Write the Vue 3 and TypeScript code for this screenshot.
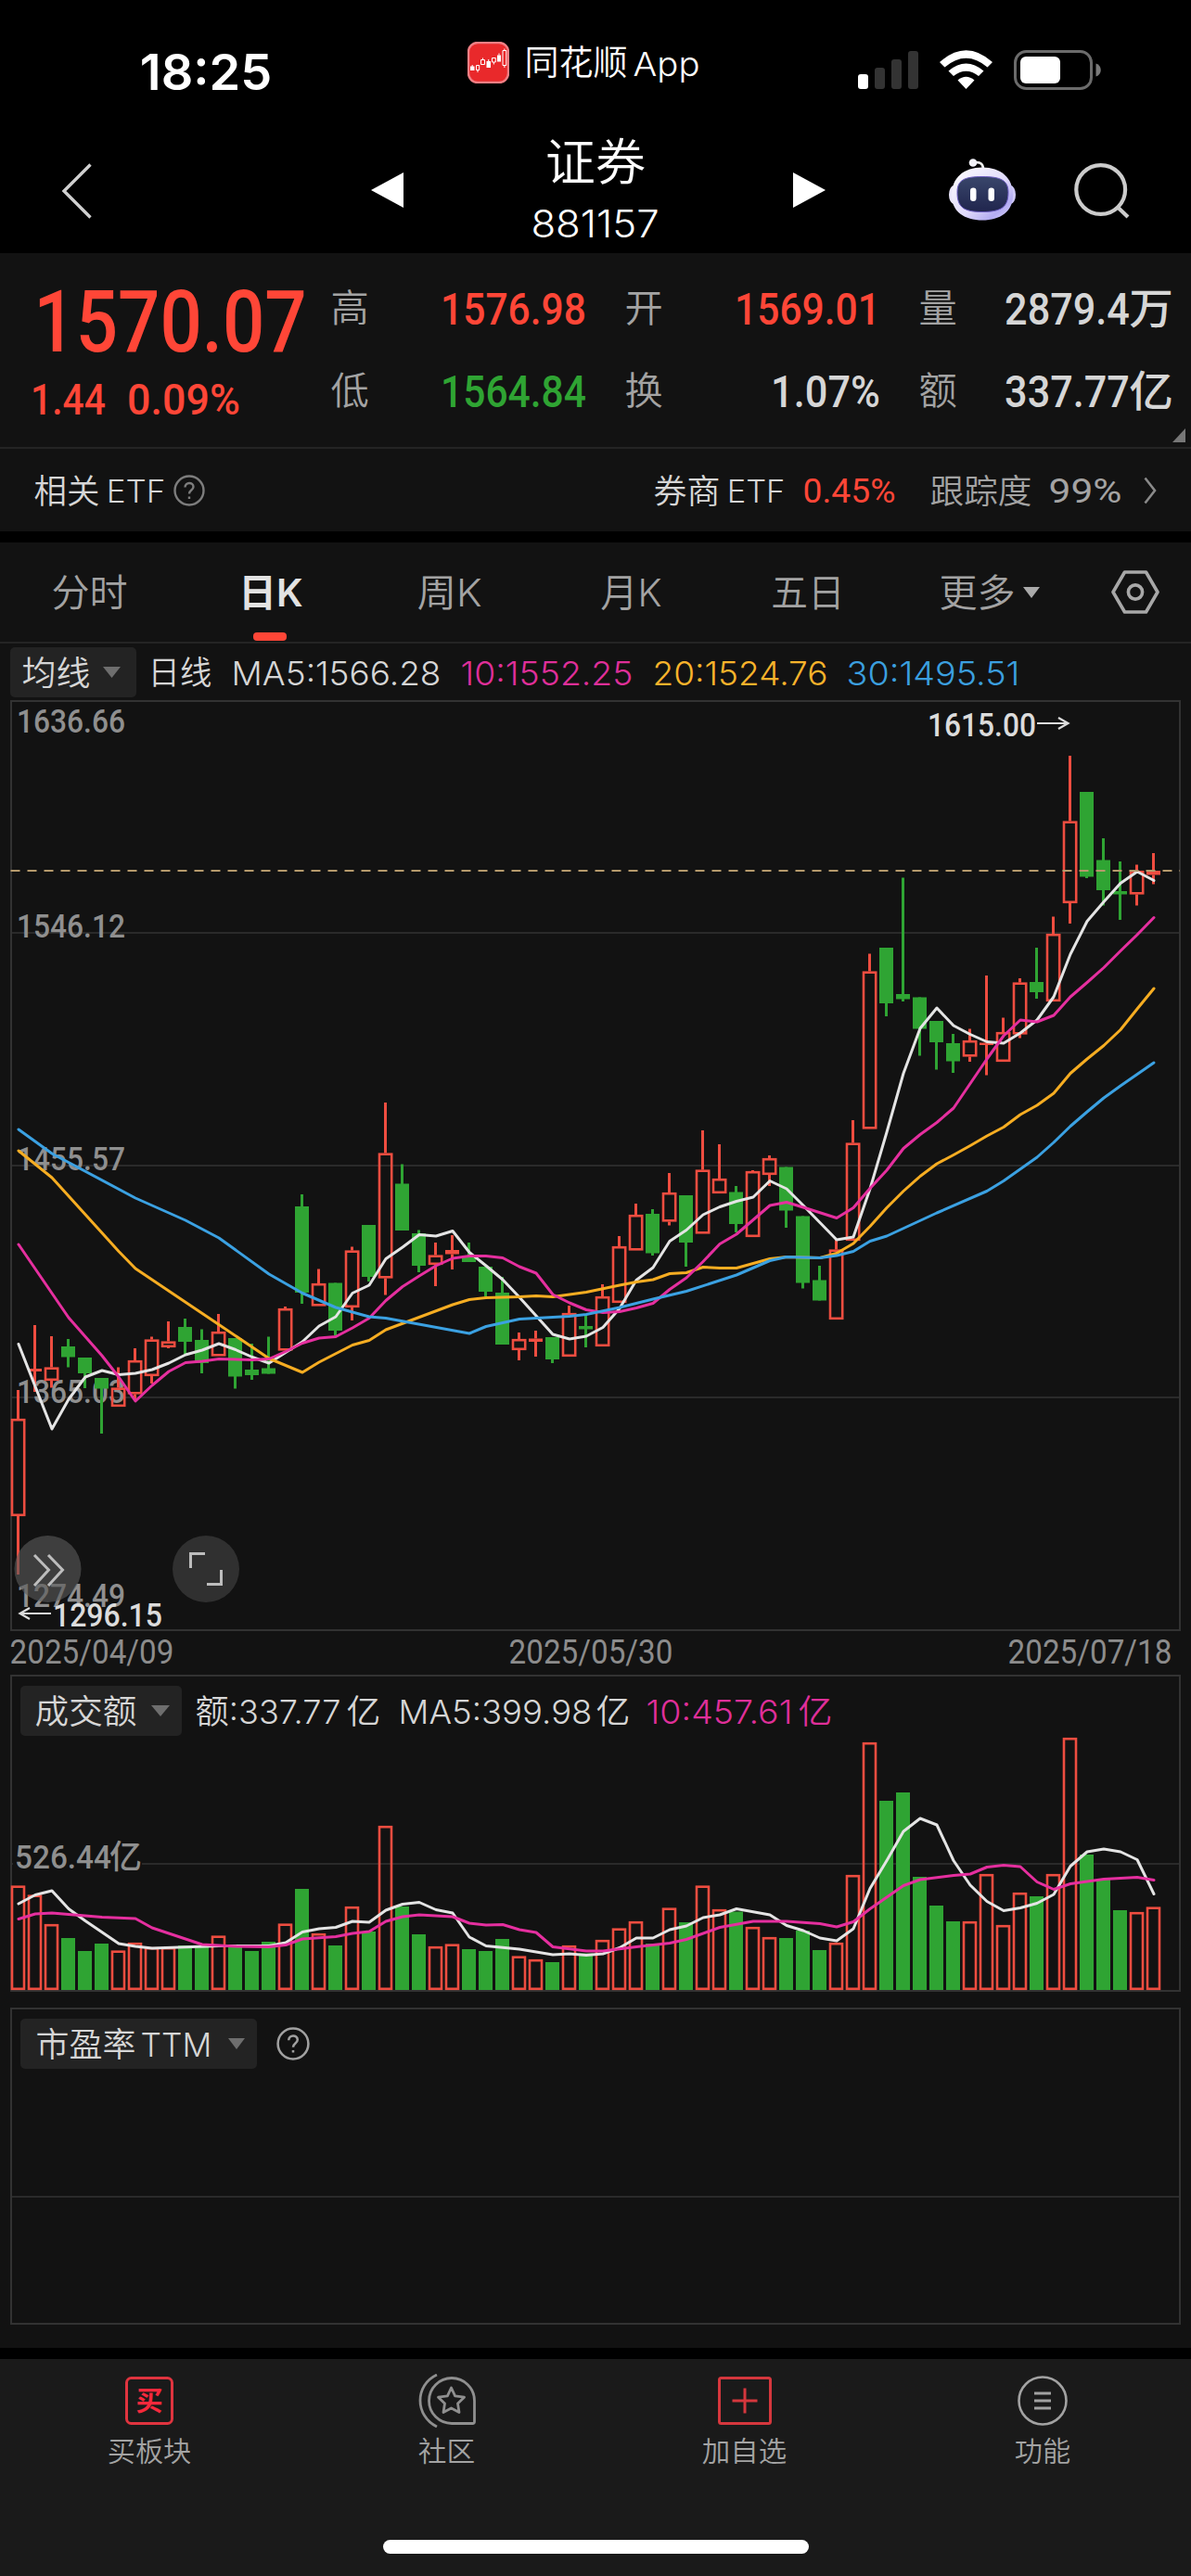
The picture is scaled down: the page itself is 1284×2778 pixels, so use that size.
<script setup lang="ts">
import { h, type FunctionalComponent } from 'vue'

interface FitProps {
  t: string
  w: number
  s: number
}

// One line of text whose glyphs are fitted to an exact width.
const FitText: FunctionalComponent<FitProps> = (p) => {
  const bearing = Number(p.s) * 0.04
  return h('svg', { class: 'fit', width: p.w, height: p.s }, [
    h(
      'text',
      {
        x: -bearing,
        y: p.s * 0.875,
        'font-size': p.s,
        textLength: Number(p.w) + bearing * 2,
        lengthAdjust: 'spacingAndGlyphs',
      },
      p.t,
    ),
  ])
}
FitText.props = ['t', 'w', 's']

type Candle = [up: 0 | 1, high: number, top: number, bottom: number, low: number, volume: number]

const STEP = 18
const FIRST = 19.5
const FLOOR = 2146

const candles: Candle[] = [
  [1, 1499, 1530, 1635, 1698, 2033.5], [1, 1429, 1476, 1479, 1501, 2043.5], [1, 1441, 1474.5, 1489, 1496.5, 2075],
  [0, 1444, 1452, 1463.5, 1474.5, 2090], [0, 1464, 1464, 1481, 1497, 2104], [0, 1486, 1486, 1497.5, 1546, 2096],
  [1, 1474.5, 1496.5, 1517, 1517, 2103.5], [1, 1454, 1467, 1503.5, 1510, 2095], [1, 1441.5, 1444.5, 1484, 1492, 2100],
  [1, 1425, 1446.5, 1453, 1454, 2100], [0, 1422, 1431, 1447, 1460, 2098], [0, 1433.5, 1445, 1470, 1481, 2099],
  [1, 1417, 1436, 1462.5, 1462.5, 2087.5], [0, 1443, 1443, 1484.5, 1497.5, 2100], [0, 1449, 1477, 1483, 1488, 2104],
  [0, 1441.5, 1475.5, 1481.5, 1481.5, 2094], [1, 1409, 1411, 1456.5, 1456.5, 2074.5], [0, 1288, 1301, 1394, 1406, 2037],
  [1, 1368.5, 1384, 1408.5, 1408.5, 2085], [0, 1383.5, 1383.5, 1435, 1440.5, 2098], [1, 1344.5, 1348.5, 1410, 1424, 2056],
  [0, 1321, 1321, 1377, 1382, 2083], [1, 1189, 1243.5, 1378.5, 1396.5, 1969], [0, 1255.5, 1276.5, 1327, 1327, 2056],
  [0, 1326.5, 1330, 1365, 1372, 2086], [1, 1340, 1353.5, 1364, 1387, 2099], [1, 1332, 1348, 1352.5, 1369, 2096.5],
  [0, 1340, 1354.5, 1361, 1361, 2102], [0, 1366, 1366, 1393, 1398, 2104], [0, 1377, 1394, 1450, 1450, 2091],
  [1, 1437, 1444, 1456, 1467, 2109.5], [1, 1435, 1443.5, 1447, 1463, 2113], [0, 1442, 1442, 1466, 1470, 2116],
  [1, 1408, 1416, 1463, 1463, 2098], [0, 1418, 1430, 1433.5, 1453, 2106.5], [1, 1385, 1398, 1452, 1452, 2092],
  [1, 1333, 1344, 1405, 1405, 2079.5], [1, 1298, 1310, 1348.5, 1348.5, 2072], [0, 1304, 1309, 1351.5, 1354, 2096],
  [1, 1265, 1286, 1317.5, 1321.5, 2057.5], [0, 1289, 1289, 1340, 1366, 2073], [1, 1219, 1261.5, 1330.5, 1330.5, 2033.5],
  [1, 1234, 1271, 1287, 1287, 2059], [0, 1279, 1285.5, 1320, 1329, 2061.5], [1, 1262, 1263, 1334, 1334, 2078],
  [1, 1246, 1249, 1267, 1279, 2089], [0, 1258.5, 1258.5, 1305.5, 1324, 2090], [0, 1311.5, 1311.5, 1383.5, 1389.5, 2082],
  [0, 1365, 1380.5, 1402.5, 1402.5, 2103], [1, 1337, 1347.5, 1423, 1423, 2095], [1, 1208, 1232.5, 1338, 1338, 2022],
  [1, 1028.5, 1047.5, 1217.5, 1217.5, 1879], [0, 1022, 1022, 1082, 1096, 1942], [0, 946.5, 1072, 1077.5, 1080, 1933],
  [0, 1075.5, 1075.5, 1109.5, 1138.5, 2024], [0, 1101, 1101, 1124, 1153.5, 2055], [0, 1115, 1125, 1144.5, 1157, 2072],
  [1, 1109.5, 1122, 1139.5, 1145, 2072], [1, 1052, 1124.5, 1127, 1159.5, 2021], [1, 1097.5, 1113, 1145, 1145, 2076],
  [1, 1055, 1059.5, 1115.5, 1119.5, 2041], [0, 1022, 1059, 1070, 1077, 2045], [1, 988.5, 1007, 1080, 1080, 2021],
  [1, 815, 885.5, 974, 996, 1874], [0, 854, 854, 945.5, 947, 2000], [0, 904, 927.5, 960, 976.5, 2026],
  [0, 929, 961, 964.5, 992, 2060], [1, 932.5, 939, 964.5, 976.5, 2062], [1, 920, 939, 943.5, 953.5, 2056.5],
]

const bars = candles.map(([up, high, top, bottom, low, volume], i) => ({
  up: up === 1,
  x: FIRST + i * STEP,
  high,
  top,
  bottom,
  low,
  volume,
  hollow: bottom - top > 5,
}))

// Each curve is a flat list of candle index, height pairs.
function curve(pairs: number[]): string {
  const out: string[] = []
  for (let i = 0; i < pairs.length; i += 2) {
    out.push(`${FIRST + 0.5 + pairs[i] * STEP},${pairs[i + 1]}`)
  }
  return out.join(' ')
}

const priceCurves = [
  { name: 'ma5', points: curve([0, 1449.5, 2, 1541, 3, 1509, 4, 1485, 5, 1478, 6, 1482.5, 7, 1481, 8, 1477, 9, 1470, 10, 1461, 11, 1456, 12, 1449, 13, 1455.5, 14, 1463.5, 15, 1470, 16, 1458.5, 17, 1447, 18, 1430, 19, 1420, 20, 1394.5, 21, 1386, 22, 1357.5, 23, 1345, 24, 1331.5, 25, 1333, 26, 1327.5, 27, 1350.5, 28, 1365, 29, 1380, 30, 1399, 31, 1419, 32, 1439, 33, 1444, 34, 1441, 35, 1431.5, 36, 1411, 37, 1380.5, 38, 1367, 39, 1338.5, 40, 1326.5, 41, 1310, 42, 1301.5, 43, 1295.5, 44, 1291, 45, 1273.5, 46, 1282, 47, 1300, 48, 1318.5, 49, 1337, 50, 1334, 51, 1282, 52, 1221, 53, 1157.5, 54, 1109, 55, 1087, 56, 1106, 57, 1115.5, 58, 1123.5, 59, 1125, 60, 1114, 61, 1100, 62, 1075, 63, 1029, 64, 993.5, 65, 972.5, 66, 952.5, 67, 940, 68, 949.5]) },
  { name: 'ma20', points: curve([0, 1241, 2, 1270, 6, 1349.5, 7, 1368, 12, 1428.5, 15, 1465, 17, 1480, 18, 1469, 20, 1450.5, 21, 1445.5, 22, 1434, 26, 1407, 27, 1401.5, 28, 1399.5, 30, 1398.5, 31, 1397.5, 32, 1398.5, 34, 1393.5, 36, 1386, 37, 1382.5, 38, 1380, 39, 1373.5, 40, 1372.5, 41, 1366.5, 42, 1367.5, 43, 1367.5, 45, 1357.5, 46, 1355.5, 48, 1356.5, 49, 1351.5, 50, 1341, 51, 1322.5, 52, 1302.5, 53, 1284.5, 54, 1268.5, 55, 1255, 56, 1245.5, 57, 1235.5, 58, 1225, 59, 1215.5, 60, 1202, 61, 1192, 62, 1179, 63, 1157.5, 64, 1142, 65, 1127.5, 66, 1110.5, 67, 1088, 68, 1066]) },
  { name: 'ma10', points: curve([0, 1342, 3, 1421, 5, 1462, 6, 1485, 7, 1511, 8, 1494, 9, 1479, 10, 1469.5, 11, 1468, 12, 1465.5, 14, 1466.5, 15, 1465.5, 16, 1457.5, 17, 1448.5, 18, 1443, 19, 1441.5, 20, 1432, 21, 1421.5, 22, 1402.5, 23, 1387.5, 24, 1376, 25, 1365, 26, 1357, 27, 1354.5, 28, 1354.5, 29, 1356.5, 30, 1366, 31, 1373, 32, 1396, 33, 1405, 34, 1412.5, 35, 1415.5, 36, 1414.5, 37, 1410.5, 38, 1405.5, 39, 1390.5, 40, 1378, 41, 1360.5, 42, 1341.5, 43, 1331, 44, 1315.5, 45, 1300, 46, 1296.5, 47, 1302, 49, 1313.5, 50, 1302.5, 51, 1281.5, 52, 1262, 53, 1238.5, 54, 1223.5, 55, 1210.5, 56, 1195, 57, 1168.5, 58, 1142, 59, 1117, 60, 1100, 61, 1102, 62, 1095, 63, 1075, 64, 1059.5, 65, 1043.5, 66, 1025.5, 67, 1008, 68, 989.5]) },
  { name: 'ma30', points: curve([0, 1218, 2, 1244, 7, 1292, 10, 1316, 12, 1335, 15, 1374, 17, 1394.5, 19, 1410, 21, 1420, 22, 1421.5, 27, 1438, 28, 1430.5, 30, 1422.5, 33, 1419.5, 34, 1417.5, 36, 1410, 38, 1401, 40, 1392.5, 43, 1375, 45, 1359.5, 46, 1355.5, 48, 1356.5, 49, 1354, 50, 1349.5, 51, 1338.5, 52, 1333, 55, 1308, 58, 1284.5, 59, 1273.5, 61, 1248, 62, 1232, 63, 1214.5, 64, 1199, 65, 1184, 66, 1171, 68, 1146]) },
]

const volumeCurves = [
  { name: 'ma5', points: curve([0, 2053, 1, 2043.5, 2, 2039, 3, 2058.5, 4, 2071.5, 6, 2096, 7, 2099, 8, 2101, 12, 2098.5, 15, 2098.5, 16, 2095, 17, 2083.5, 18, 2080, 19, 2078.5, 20, 2072, 21, 2073, 22, 2060, 23, 2053.5, 24, 2051.5, 25, 2059.5, 26, 2063, 27, 2089, 28, 2098.5, 30, 2102, 32, 2108, 33, 2107, 34, 2108.5, 35, 2107, 36, 2100.5, 37, 2090, 38, 2090, 39, 2081, 40, 2077, 41, 2068, 42, 2065, 43, 2058.5, 45, 2065, 46, 2076.5, 47, 2082, 48, 2090, 49, 2093, 50, 2080, 51, 2036.5, 52, 2006.5, 53, 1975, 54, 1961, 55, 1968, 56, 2006.5, 57, 2033, 58, 2050.5, 59, 2060.5, 60, 2057.5, 61, 2052.5, 62, 2043, 63, 2012.5, 64, 1997, 65, 1994, 66, 1997, 67, 2005.5, 68, 2042.5]) },
  { name: 'ma10', points: curve([0, 2069.5, 1, 2064, 2, 2063, 4, 2066, 5, 2067.5, 7, 2069, 8, 2079, 11, 2097, 13, 2099, 15, 2099.5, 16, 2097.5, 17, 2091, 19, 2088.5, 20, 2085, 21, 2083, 22, 2072, 23, 2067, 24, 2065, 26, 2067, 27, 2074, 28, 2076, 29, 2075.5, 30, 2081, 31, 2084, 32, 2099.5, 34, 2104, 35, 2104, 37, 2099.5, 39, 2095.5, 40, 2091.5, 42, 2078.5, 44, 2072, 46, 2072, 48, 2074.5, 49, 2078, 50, 2072.5, 51, 2058.5, 53, 2033.5, 54, 2027, 56, 2022.5, 57, 2021, 58, 2013.5, 59, 2011.5, 60, 2013, 61, 2029.5, 62, 2037.5, 63, 2031.5, 65, 2026.5, 67, 2024.5, 68, 2027.5]) },
]

const axis = [
  { label: '1636.66', y: 789.5 },
  { label: '1546.12', y: 1011 },
  { label: '1455.57', y: 1261.5 },
  { label: '1365.03', y: 1512.5 },
  { label: '1274.49', y: 1733 },
]
</script>

<template>
  <div class="screen">
    <div class="status">
      <FitText class="time" t="18:25" :w="138" :s="54" />
      <div class="app">
        <svg width="45" height="45" viewBox="0 0 45 45">
          <rect x="1" y="1" width="43" height="43" rx="10" fill="#e9292b" stroke="#f07f84" stroke-width="2.4" />
          <g fill="#fff">
            <rect x="3" y="26.5" width="4.5" height="4.5" />
            <rect x="20.5" y="21" width="4.5" height="7" />
            <rect x="32" y="14.5" width="4" height="7" />
          </g>
          <g fill="none" stroke="#fff" stroke-width="1">
            <path d="M9.5 25.5h3.2v5h-3.2zM11 30.5v2.5M14.500 19.500h4v5h-4zM16.500 17.500v2M22.700 19v2M26.500 17.500h3.800v4.500h-3.800zM28.400 22v2.500M34 12.500v2M38 9.500h3.800v16h-3.800zM39.900 7.500v2M39.900 25.500v2.500M5.200 25v2" />
          </g>
        </svg>
        <FitText class="app-cn" t="同花顺" :w="108" :s="37" />
        <FitText class="app-en" t="App" :w="69" :s="36" />
      </div>
      <svg class="signals" width="262" height="43" viewBox="925 54 262 43">
        <rect x="925" y="80" width="11" height="16" rx="3" fill="#fff" />
        <g fill="#333">
          <rect x="943" y="73" width="11" height="23" rx="3" />
          <rect x="961" y="64" width="11" height="32" rx="3" />
          <rect x="979" y="55" width="11" height="41" rx="3" />
        </g>
        <g fill="#fff">
          <path d="M1013 67Q1041.500 41.500 1070 67L1064.500 72.500Q1041.500 53 1018.500 72.500Z" />
          <path d="M1022.500 76.500Q1041.500 60.500 1060.500 76.500L1055 82Q1041.500 71.500 1028 82Z" />
          <path d="M1032.500 86.500Q1041.500 79 1050.500 86.500L1041.500 96Z" />
        </g>
        <rect x="1094.500" y="55.500" width="82" height="40" rx="12" fill="none" stroke="#6b6b6b" stroke-width="3" />
        <rect x="1100" y="61" width="43" height="29" rx="6" fill="#fff" />
        <path d="M1181.500 68.500C1188.500 70.500 1188.500 80.500 1181.500 82.500Z" fill="#7b7b7b" />
      </svg>
    </div>

    <div class="nav">
      <svg class="back" width="34" height="60" viewBox="0 0 34 60"><path d="M31.500 1.500L3 30L31.500 58.500" fill="none" stroke="#d0d0d0" stroke-width="3.400" /></svg>
      <svg class="prev" width="35" height="38" viewBox="0 0 35 38"><path d="M35 0V38L0 19Z" fill="#fff" /></svg>
      <div class="title">
        <FitText t="证券" :w="104" :s="54" />
        <FitText class="code" t="881157" :w="135" :s="41" />
      </div>
      <svg class="next" width="35" height="38" viewBox="0 0 35 38"><path d="M0 0V38L35 19Z" fill="#fff" /></svg>
      <svg class="robot" width="72" height="67" viewBox="1023 170.500 72 67">
        <defs>
          <linearGradient id="shell" x1="0" y1="0" x2="1" y2="1">
            <stop offset="0" stop-color="#fff" />
            <stop offset=".55" stop-color="#e0dafa" />
            <stop offset=".8" stop-color="#b3acf2" />
            <stop offset="1" stop-color="#e6e1ff" />
          </linearGradient>
          <linearGradient id="visor" x1="0" y1="0" x2="0" y2="1">
            <stop offset="0" stop-color="#39466b" />
            <stop offset="1" stop-color="#20254d" />
          </linearGradient>
        </defs>
        <path d="M1049 175.500C1057 173 1060.500 176.500 1060 184" fill="none" stroke="#eee" stroke-width="2.800" />
        <circle cx="1049" cy="175" r="4.300" fill="#f2f2f8" />
        <ellipse cx="1028.500" cy="209.500" rx="5.500" ry="10" fill="#ebe7fc" />
        <ellipse cx="1089.500" cy="209.500" rx="5.500" ry="10" fill="#cfc9f8" />
        <path d="M1059 180C1079 180 1092 191 1092 210C1092 228 1078 237 1059 237C1040 237 1026 228 1026 210C1026 191 1039 180 1059 180Z" fill="url(#shell)" />
        <path d="M1059 190C1079 190 1087 194 1087 207C1087 223 1079 228 1059 228C1039 228 1032 223 1032 207C1032 194 1039 190 1059 190Z" fill="url(#visor)" stroke="#6b5cc0" stroke-width="1" />
        <rect x="1046" y="202" width="6.500" height="14.500" rx="3.200" fill="#fff" />
        <rect x="1065.500" y="202" width="6.500" height="14.500" rx="3.200" fill="#fff" />
      </svg>
      <svg class="search" width="60" height="60" viewBox="1158 176 60 60">
        <circle cx="1186.700" cy="204.500" r="26.400" fill="none" stroke="#ccc" stroke-width="4.200" />
        <path d="M1205 223.500L1216 234" stroke="#ccc" stroke-width="4.200" />
      </svg>
    </div>

    <div class="quote">
      <div class="price">
        <FitText class="num up big" t="1570.07" :w="287" :s="93" />
        <div class="change">
          <FitText class="num up" t="1.44" :w="77" :s="47" />
          <FitText class="num up" t="0.09%" :w="118" :s="47" />
        </div>
      </div>
      <div class="metrics">
        <div class="metric"><FitText class="dim" t="高" :w="38" :s="41" /><FitText class="num up" t="1576.98" :w="153" :s="48" /></div>
        <div class="metric"><FitText class="dim" t="开" :w="38" :s="41" /><FitText class="num up" t="1569.01" :w="153" :s="48" /></div>
        <div class="metric"><FitText class="dim" t="量" :w="38" :s="41" /><span class="pair"><FitText class="num light" t="2879.4" :w="131" :s="48" /><FitText class="num light" t="万" :w="44" :s="46" /></span></div>
        <div class="metric"><FitText class="dim" t="低" :w="38" :s="41" /><FitText class="num down" t="1564.84" :w="153" :s="48" /></div>
        <div class="metric"><FitText class="dim" t="换" :w="38" :s="41" /><FitText class="num light" t="1.07%" :w="114" :s="48" /></div>
        <div class="metric"><FitText class="dim" t="额" :w="38" :s="41" /><span class="pair"><FitText class="num light" t="337.77" :w="131" :s="48" /><FitText class="num light" t="亿" :w="44" :s="46" /></span></div>
      </div>
      <svg class="corner" width="14" height="15" viewBox="0 0 14 15"><path d="M14 0V15H0Z" fill="#777" /></svg>
    </div>

    <div class="etf">
      <FitText class="light" t="相关" :w="68" :s="36" />
      <FitText class="light etf-en" t="ETF" :w="61" :s="34" />
      <svg class="help" width="34" height="34" viewBox="0 0 34 34">
        <circle cx="17" cy="17" r="15.500" fill="none" stroke="#7d7d7d" stroke-width="2.400" />
        <path d="M12.500 13.500C12.500 7.500 21.500 7.500 21.500 13C21.500 16.500 17 16.500 17 20.500M17 23.500V26" fill="none" stroke="#7d7d7d" stroke-width="2.400" />
      </svg>
      <FitText class="light broker" t="券商" :w="69" :s="36" />
      <FitText class="light etf-en" t="ETF" :w="60" :s="34" />
      <FitText class="num thin up rate" t="0.45%" :w="97" :s="37" />
      <FitText class="dim track" t="跟踪度" :w="107" :s="36" />
      <FitText class="num thin dim pct" t="99%" :w="76" :s="37" />
      <svg class="go" width="14" height="30" viewBox="0 0 14 30"><path d="M1.500 1.500L12 15L1.500 28.500" fill="none" stroke="#8a8a8a" stroke-width="2.600" /></svg>
    </div>
    <div class="band" />

    <div class="tabs">
      <FitText class="dim" t="分时" :w="79" :s="41" />
      <div class="tab-on"><FitText t="日K" :w="66" :s="41" /></div>
      <FitText class="dim week" t="周K" :w="67" :s="41" />
      <FitText class="dim month" t="月K" :w="63" :s="41" />
      <FitText class="dim five" t="五日" :w="76" :s="41" />
      <FitText class="dim more" t="更多" :w="79" :s="41" />
      <svg class="caret" width="18" height="12" viewBox="0 0 18 12"><path d="M0 0H18L9 12Z" fill="#aaa" /></svg>
      <svg class="gear" width="52" height="47" viewBox="0 0 52 47">
        <path d="M14.500 2H37.500L50 23.500L37.500 45H14.500L2 23.500Z" fill="none" stroke="#a8a8a8" stroke-width="3.600" stroke-linejoin="round" />
        <circle cx="26" cy="23.500" r="7.600" fill="none" stroke="#a8a8a8" stroke-width="3.600" />
      </svg>
    </div>

    <div class="legend">
      <div class="picker picker-ma">
        <FitText class="light" t="均线" :w="71" :s="36" />
        <svg width="19" height="12" viewBox="0 0 19 12"><path d="M0 0H19L9.500 12Z" fill="#6e6e6e" /></svg>
      </div>
      <FitText class="light day" t="日线" :w="66" :s="35" />
      <FitText class="light l5" t="MA5:1566.28" :w="223" :s="36" />
      <FitText class="pink l10" t="10:1552.25" :w="183" :s="36" />
      <FitText class="gold l20" t="20:1524.76" :w="186" :s="36" />
      <FitText class="blue l30" t="30:1495.51" :w="184" :s="36" />
    </div>

    <div class="kline">
      <svg class="plot" width="1284" height="1004" viewBox="0 755 1284 1004">
        <g class="grid">
          <rect x="12" y="756" width="1260" height="1002" />
          <path d="M13 1006H1271M13 1257H1271M13 1507H1271" />
        </g>
        <g class="axis num">
          <text v-for="a in axis" :key="a.label" x="18" :y="a.y" font-size="34.500" textLength="117" lengthAdjust="spacingAndGlyphs">{{ a.label }}</text>
        </g>
        <g v-for="b in bars" :key="b.x" :class="b.up ? 'rise' : 'fall'">
          <template v-if="b.up">
            <path :d="`M${b.x} ${b.high}V${b.top}M${b.x} ${b.bottom}V${b.low}`" />
            <rect v-if="b.hollow" :x="b.x - 6.500" :y="b.top + 1.200" width="13.200" :height="b.bottom - b.top - 2.400" />
            <rect v-else class="solid" :x="b.x - 7.500" :y="b.top" width="15" :height="b.bottom - b.top" />
          </template>
          <template v-else>
            <path :d="`M${b.x} ${b.high}V${b.low}`" />
            <rect :x="b.x - 7.500" :y="b.top" width="15" :height="b.bottom - b.top" />
          </template>
        </g>
        <polyline v-for="c in priceCurves" :key="c.name" class="curve" :class="c.name" :points="c.points" />
        <path class="last" d="M11.500 939H1272" />
        <g class="marks num">
          <text x="1000" y="793.500" font-size="35" textLength="117" lengthAdjust="spacingAndGlyphs">1615.00</text>
          <path d="M1118 780H1151M1141 774L1151.500 780L1141 786" />
          <text x="57" y="1753.500" font-size="35" textLength="118" lengthAdjust="spacingAndGlyphs">1296.15</text>
          <path d="M55 1740H22M32 1734L21.500 1740L32 1746" />
        </g>
        <circle cx="51.500" cy="1692" r="36" fill="#5a5a5a" fill-opacity=".62" />
        <path class="tool" d="M37 1677L52.500 1693L37 1710M52 1677L67.500 1693L52 1710" />
        <circle cx="222" cy="1692" r="36" fill="#303030" />
        <path class="tool" d="M205.500 1691V1675.500H221M223 1708.500H238.500V1693" />
      </svg>
    </div>

    <div class="dates">
      <FitText class="num thin axis-text" t="2025/04/09" :w="174" :s="36" />
      <FitText class="num thin axis-text" t="2025/05/30" :w="174" :s="36" />
      <FitText class="num thin axis-text" t="2025/07/18" :w="174" :s="36" />
    </div>

    <div class="volume">
      <svg class="canvas" width="1284" height="342" viewBox="0 1806 1284 342">
        <g class="grid">
          <rect x="12" y="1807" width="1260" height="340" />
          <path d="M13 2010H1271" />
        </g>
        <g class="axis num">
          <rect x="14" y="1990" width="139" height="28" fill="#121212" />
          <text x="16" y="2015" font-size="35" textLength="104" lengthAdjust="spacingAndGlyphs">526.44</text>
          <text x="118" y="2015" font-size="35">亿</text>
        </g>
        <g v-for="b in bars" :key="b.x" :class="b.up ? 'rise' : 'fall'">
          <rect v-if="b.up" :x="b.x - 6.500" :y="b.volume + 1.200" width="13" :height="FLOOR - b.volume - 2.400" />
          <rect v-else :x="b.x - 7.500" :y="b.volume" width="15" :height="FLOOR - b.volume" />
        </g>
        <polyline v-for="c in volumeCurves" :key="c.name" class="curve" :class="c.name" :points="c.points" />
      </svg>
      <div class="panel-head">
        <div class="picker picker-vol">
          <FitText class="light" t="成交额" :w="107" :s="36" />
          <svg width="20" height="12" viewBox="0 0 20 12"><path d="M0 0H20L10 12Z" fill="#6e6e6e" /></svg>
        </div>
        <FitText class="light v1" t="额:337.77" :w="154" :s="36" />
        <FitText class="light yi" t="亿" :w="34" :s="36" />
        <FitText class="light v2" t="MA5:399.98" :w="206" :s="36" />
        <FitText class="light yi2" t="亿" :w="34" :s="36" />
        <FitText class="pink v3" t="10:457.61" :w="155" :s="36" />
        <FitText class="pink yi" t="亿" :w="34" :s="36" />
      </div>
    </div>

    <div class="ratio">
      <svg class="canvas" width="1284" height="342" viewBox="0 2165 1284 342">
        <g class="grid">
          <rect x="12" y="2166" width="1260" height="340" />
          <path d="M13 2369H1271" />
        </g>
      </svg>
      <div class="panel-head">
        <div class="picker picker-pe">
          <FitText class="light" t="市盈率" :w="105" :s="36" />
          <FitText class="light ttm" t="TTM" :w="74" :s="35" />
          <svg width="18" height="12" viewBox="0 0 18 12"><path d="M0 0H18L9 12Z" fill="#6e6e6e" /></svg>
        </div>
        <svg class="help2" width="36" height="36" viewBox="0 0 34 34">
          <circle cx="17" cy="17" r="15.500" fill="none" stroke="#a0a0a0" stroke-width="2.400" />
          <path d="M12.500 13.500C12.500 7.500 21.500 7.500 21.500 13C21.500 16.500 17 16.500 17 20.500M17 23.500V26" fill="none" stroke="#a0a0a0" stroke-width="2.400" />
        </svg>
      </div>
    </div>
    <div class="band" />

    <div class="footer">
      <div class="actions">
        <div class="action">
          <svg width="60" height="58" viewBox="0 0 60 58">
            <rect x="5.500" y="4.500" width="49" height="49" rx="5" fill="none" stroke="#e0343f" stroke-width="3" />
            <text x="30" y="40" text-anchor="middle" font-size="29" font-weight="700" fill="#f5293c">买</text>
          </svg>
          <FitText class="dim" t="买板块" :w="88" :s="30" />
        </div>
        <div class="action">
          <svg width="64" height="58" viewBox="450 2560 64 58">
            <g fill="none" stroke="#8f8f8f" stroke-width="2.800">
              <path d="M471 2561C447 2572 447 2605 471 2617" />
              <path d="M487 2613.500A24.500 24.500 0 1 1 511.500 2589V2611.500Q511.500 2613.500 509.500 2613.500Z" />
              <path d="M486.500 2575L490.600 2583.800L500.500 2585.200L493.500 2592L495 2601.500L486.500 2597L478 2601.500L479.500 2592L472.500 2585.200L482.400 2583.800Z" stroke-linejoin="round" />
            </g>
          </svg>
          <FitText class="dim" t="社区" :w="59" :s="30" />
        </div>
        <div class="action">
          <svg width="60" height="58" viewBox="0 0 60 58">
            <rect x="2.500" y="4.500" width="55" height="49" rx="2" fill="none" stroke="#d5373d" stroke-width="3" />
            <path d="M30 15.500V42.500M16.500 29H43.500" stroke="#d5373d" stroke-width="3" />
          </svg>
          <FitText class="dim" t="加自选" :w="89" :s="30" />
        </div>
        <div class="action">
          <svg width="60" height="58" viewBox="0 0 60 58">
            <circle cx="30" cy="29" r="25.500" fill="none" stroke="#a2a2a2" stroke-width="2.600" />
            <path d="M21 21H39M21 29H39M21 37H39" stroke="#a2a2a2" stroke-width="2.800" />
          </svg>
          <FitText class="dim" t="功能" :w="58" :s="30" />
        </div>
      </div>
      <div class="home" />
    </div>
  </div>
</template>

<style>
body { background: #121212; }
.fit { display: block; flex: none; overflow: visible; fill: currentColor; }
.fit text { white-space: pre; }
</style>

<style scoped>
.screen {
  width: 1284px;
  height: 2778px;
  display: flex;
  flex-direction: column;
  overflow: hidden;
  background: #121212;
  color: #fff;
  font-family: Inter, 'Noto Sans CJK SC', sans-serif;
  font-weight: 350;
}
.screen > * { flex: none; }
svg { display: block; flex: none; }
.num { font-family: Roboto, 'Noto Sans CJK SC', sans-serif; font-weight: 500; }
.num.thin { font-weight: 400; }
.up { color: #ff4637; }
.down { color: #2fa433; }
.light { color: #d6d6d6; }
.dim { color: #a3a3a3; }
.pink { color: #df2f99; }
.gold { color: #f7b32b; }
.blue { color: #3b9fdf; }
.axis-text { color: #8c8c8c; }

.status { display: flex; align-items: flex-start; height: 139px; background: #000; }
.time { margin: 50px 0 0 153px; font-weight: 600; }
.app { display: flex; align-items: center; height: 45px; margin: 45px 0 0 213px; }
.app-cn { margin-left: 18px; }
.app-en { margin-left: 9px; }
.signals { margin: 54px 0 0 172px; }

.nav { display: flex; align-items: center; height: 134px; background: #000; }
.back { margin-left: 66px; }
.prev { margin: 0 0 2px 300px; }
.title { display: flex; flex-direction: column; align-items: center; gap: 18px; width: 135px; margin: 0 0 4px 139px; }
.next { margin: 0 0 2px 146px; }
.robot { margin: 0 0 4px 133px; }
.search { margin-left: 63px; }

.quote { position: relative; display: flex; height: 211px; border-bottom: 2px solid #242424; box-sizing: border-box; }
.price { width: 322px; padding: 25px 0 0 35px; box-sizing: border-box; }
.big { margin-left: 5px; }
.change { display: flex; gap: 27px; margin-top: 15px; }
.metrics { display: grid; grid-template-columns: 272px 272px 271px; grid-template-rows: 89px 89px; column-gap: 45px; margin: 14px 0 0 36px; }
.metric { display: flex; align-items: center; justify-content: space-between; }
.pair { display: flex; align-items: center; gap: 3px; }
.corner { position: absolute; right: 6px; bottom: 5px; }

.etf { display: flex; align-items: center; height: 89px; padding-left: 38px; }
.etf-en { margin-left: 10px; }
.help { margin-left: 10px; }
.broker { margin-left: 485px; }
.rate { margin-left: 22px; }
.track { margin-left: 40px; }
.pct { margin-left: 21px; }
.go { margin-left: 25px; }
.band { height: 12px; background: #000; }

.tabs { display: flex; align-items: center; height: 109px; box-sizing: border-box; padding-left: 57px; border-bottom: 2px solid #242424; }
.tab-on { position: relative; margin-left: 123px; color: #e2e2e2; font-weight: 600; }
.tab-on::after { content: ''; position: absolute; left: 14px; top: 64px; width: 36px; height: 9px; border-radius: 4px; background: #ff4637; }
.week { margin-left: 126px; }
.month { margin-left: 131px; }
.five { margin-left: 121px; }
.more { margin-left: 105px; }
.caret { margin-left: 10px; }
.gear { margin-left: 77px; }

.legend { display: flex; align-items: center; height: 61px; padding-left: 11px; }
.picker { display: flex; align-items: center; height: 54px; box-sizing: border-box; border-radius: 5px; background: #232323; flex: none; }
.picker-ma { width: 136px; padding-left: 14px; gap: 15px; }
.day { margin-left: 14px; }
.l5 { margin-left: 24px; }
.l10 { margin-left: 24px; }
.l20 { margin-left: 24px; }
.l30 { margin-left: 23px; }

.grid { fill: none; stroke: #323232; stroke-width: 2; }
.grid path { stroke: #2a2a2a; }
.axis { fill: #8f8f8f; }
.rise { fill: none; stroke: #ee4d40; stroke-width: 2.6; }
.rise .solid { fill: #ee4d40; stroke: none; }
.rise path, .fall path { stroke-width: 3; }
.fall { fill: #2fa433; }
.fall path { stroke: #2fa433; }
.curve { fill: none; stroke-width: 3; stroke-linejoin: round; stroke-linecap: round; }
.ma5 { stroke: #e4e4e4; }
.ma10 { stroke: #e52f9f; }
.ma20 { stroke: #f6ad22; }
.ma30 { stroke: #3ba1e2; }
.last { stroke: #b59a6c; stroke-width: 2; stroke-dasharray: 10 8; }
.marks { fill: #dcdcdc; }
.marks path { fill: none; stroke: #dcdcdc; stroke-width: 2.2; }
.tool { fill: none; stroke: #bdbdbd; stroke-width: 3; }

.dates { display: flex; justify-content: space-between; align-items: center; height: 47px; padding: 0 22px 5px 12px; box-sizing: border-box; }
.volume, .ratio { position: relative; height: 342px; }
.ratio { margin: 17px 0 25px; }
.canvas { position: absolute; left: 0; top: 0; }
.panel-head { position: relative; display: flex; align-items: center; height: 54px; padding: 12px 0 0 22px; }
.picker-vol { width: 174px; padding-left: 17px; gap: 17px; }
.picker-pe { width: 255px; padding-left: 18px; }
.ttm { margin: 0 19px 0 8px; }
.v1 { margin-left: 16px; }
.yi { margin-left: 9px; }
.v2 { margin-left: 22px; }
.yi2 { margin-left: 7px; }
.v3 { margin-left: 20px; }
.help2 { margin-left: 21px; }

.footer { flex: 1; background: #1a1a1a; }
.actions { display: flex; height: 195px; }
.action { flex: 1; display: flex; flex-direction: column; align-items: center; padding-top: 16px; gap: 10px; }
.home { width: 459px; height: 15px; margin: 0 auto; border-radius: 8px; background: #fff; }
</style>
